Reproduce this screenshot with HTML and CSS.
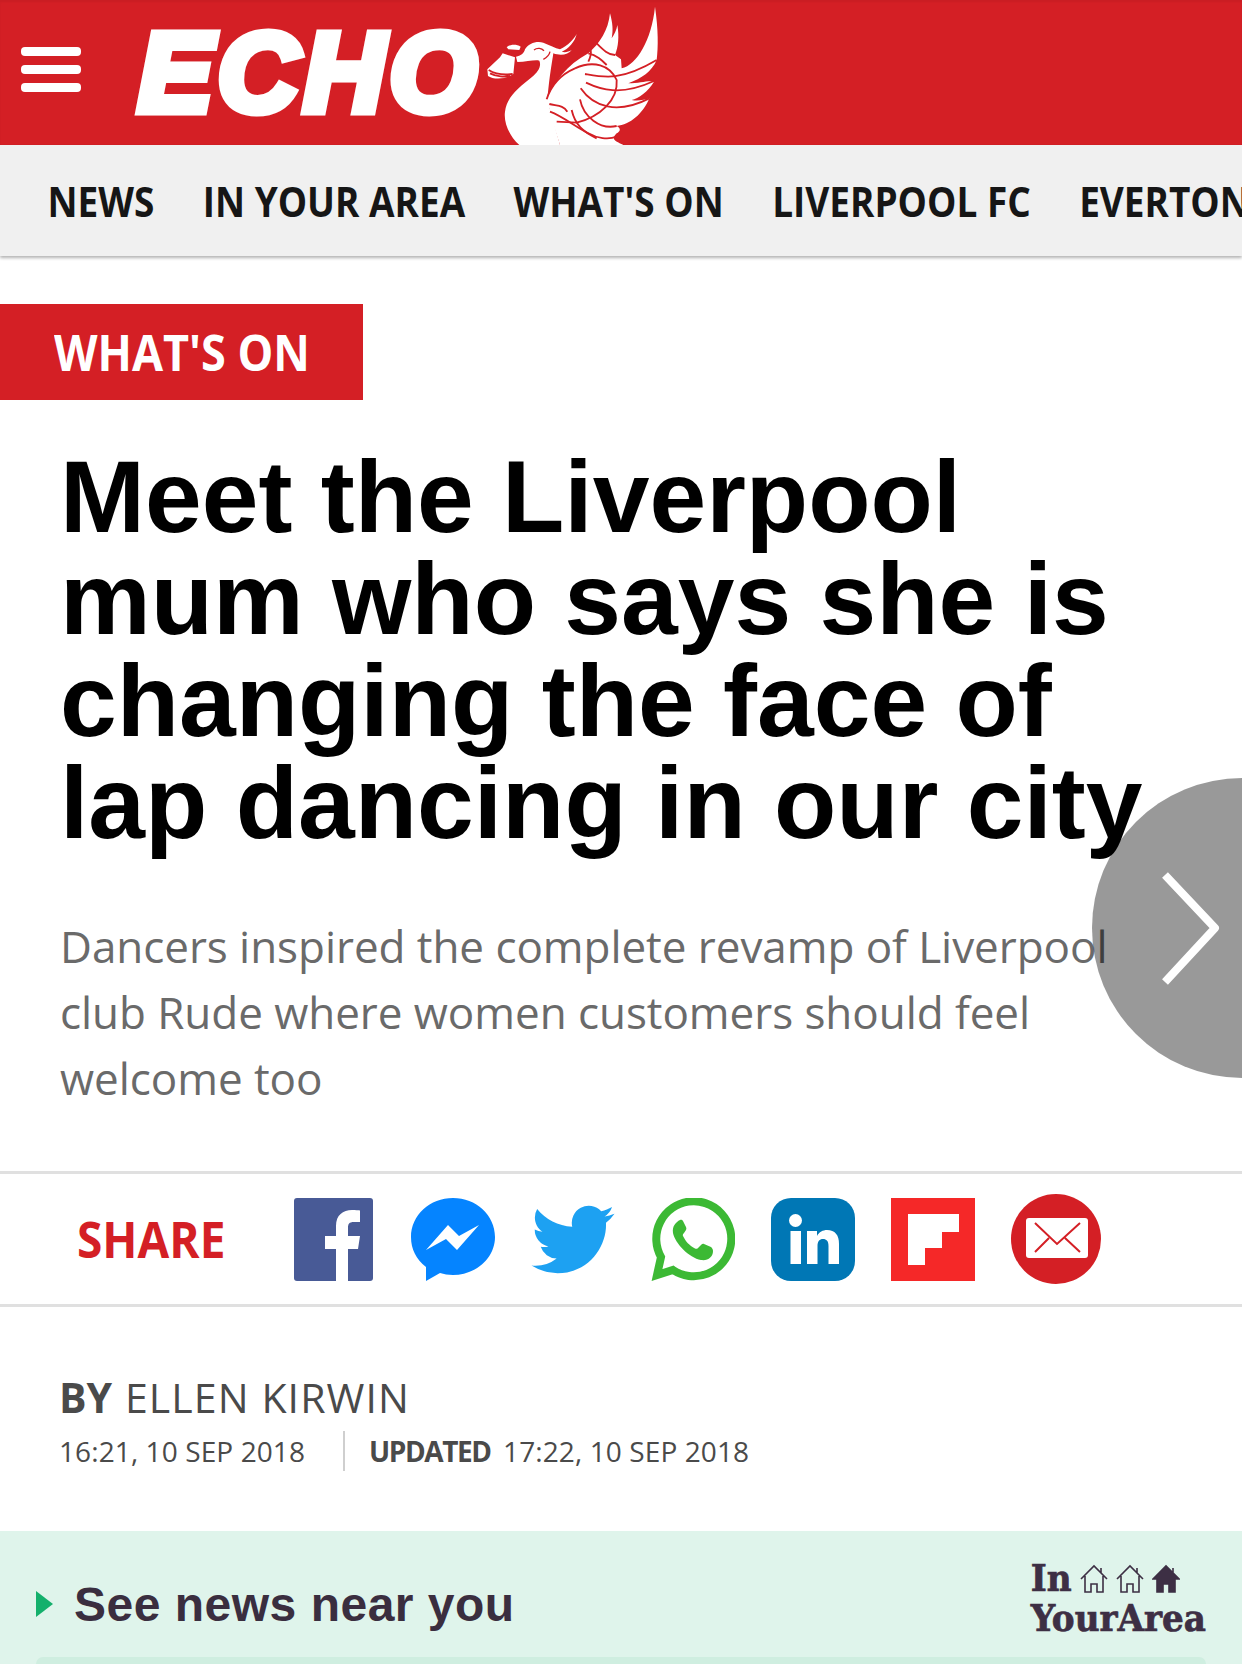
FILE: index.html
```html
<!DOCTYPE html>
<html>

  <head>
    <title>Meet the Liverpool mum who says she is changing the face of lap dancing in our city</title>
    <link rel="stylesheet" href="styles.css">
  </head>

  <body>
    <div class="page">

      <header class="site-header">
        <div class="menu-icon">
          <span></span>
          <span></span>
          <span></span>
        </div>
        <span class="logo-text">ECHO</span>
        <svg class="liver-bird" viewBox="0 0 660 435">
          <!-- bell -->
          <path class="bird-fill" d="M82 208 L120 172 L128 160 L165 172 L160 222 C140 238 100 240 84 228 Z"/>
          <path class="bird-line" d="M86 210 C105 222 135 225 158 222 M90 220 C110 230 135 232 150 228"/>
          <path class="bird-fill" d="M140 142 C150 132 170 132 182 140 L178 150 L145 148 Z"/>
          <!-- head and body -->
          <path class="bird-fill" d="M178 435 C150 410 130 370 135 335 C140 290 180 260 215 232 C235 215 245 198 238 182 C225 178 200 186 172 186 L168 170 C182 168 192 160 195 148 C205 130 230 122 250 128 C270 135 285 145 300 148 C325 135 340 120 350 102 C345 125 325 148 305 155 C315 158 325 156 335 150 C325 165 300 168 280 160 C276 190 270 215 262 300 L300 435 Z"/>
          <path class="bird-line thin" d="M222 150 C232 142 245 145 252 152 M250 178 C262 172 268 165 270 155"/>
          <!-- wings -->
          <path class="bird-fill" d="M258 300 C280 250 320 195 385 160 C420 130 445 90 450 40 C458 70 460 90 455 115 C462 105 470 90 472 75 C478 110 475 140 465 165 L483 178 L485 205 C530 195 575 120 585 20 C595 90 595 140 590 180 C575 215 545 235 505 250 C540 250 565 240 582 245 C565 275 535 295 515 300 C535 305 555 298 568 295 C550 340 510 375 470 378 C485 385 480 395 470 400 C450 420 470 425 490 435 L300 435 C290 400 270 350 270 330 Z"/>
          <path class="bird-line" d="M260 298 C275 250 310 220 345 205 M268 312 C290 318 310 315 322 335 M270 335 C310 350 345 380 385 400 C410 415 445 420 470 410"/>
          <path class="bird-line" d="M375 222 C430 232 480 245 590 180 M378 248 C420 268 480 290 582 243 M362 265 C400 320 470 345 568 295 M345 205 C400 180 450 195 470 240 C475 300 420 350 350 368 L290 365"/>
          <path class="bird-line" d="M360 298 C370 350 420 390 470 378 M335 330 C345 375 370 395 410 415 M385 160 C410 165 425 180 440 195 M410 130 C430 150 445 165 465 165 M392 150 C395 165 390 175 385 185"/>
        </svg>
      </header>

      <nav class="main-nav">
        <div class="nav-links">
          <span>NEWS</span>
          <span>IN YOUR AREA</span>
          <span>WHAT'S ON</span>
          <span>LIVERPOOL FC</span>
          <span>EVERTON FC</span>
        </div>
      </nav>

      <div class="section-tag"><span>WHAT'S ON</span></div>

      <h1 class="headline">Meet the Liverpool mum who says she is changing the face of lap dancing in our city</h1>

      <p class="standfirst">Dancers inspired the complete revamp of Liverpool club Rude where women customers should feel welcome too</p>

      <div class="share-bar">
        <span class="share-label">SHARE</span>
        <svg class="share-icon fb" viewBox="0 0 79 83">
          <rect width="79" height="83" rx="3" fill="#485a96"/>
          <path fill="#fff" d="M42 83 V51 H31 V38 H42 V28 C42 17 49 12 58 12 C61 12 65 12.3 66 12.5 V24 H60 C55 24 54 26 54 30 V38 H66 L64 51 H54 V83 Z"/>
        </svg>
        <svg class="share-icon" viewBox="0 0 84 83">
          <path fill="#0584ff" d="M42 0 C19 0 0 17 0 39 C0 51 5 61 15 69 V83 L29 75 C33 76 37 77 42 77 C65 77 84 60 84 39 C84 17 65 0 42 0 Z"/>
          <path fill="#fff" d="M15 52 L37 27 L48 38 L68 27 L46 52 L35 41 Z"/>
        </svg>
        <svg class="share-icon" viewBox="0 0 24 24">
          <path fill="#1da1f2" d="M23.953 4.57a10 10 0 01-2.825.775 4.958 4.958 0 002.163-2.723c-.951.555-2.005.959-3.127 1.184a4.92 4.92 0 00-8.384 4.482C7.69 8.095 4.067 6.13 1.64 3.162a4.822 4.822 0 00-.666 2.475c0 1.71.87 3.213 2.188 4.096a4.904 4.904 0 01-2.228-.616v.06a4.923 4.923 0 003.946 4.827 4.996 4.996 0 01-2.212.085 4.936 4.936 0 004.604 3.417 9.867 9.867 0 01-6.102 2.105c-.39 0-.779-.023-1.17-.067a13.995 13.995 0 007.557 2.209c9.053 0 13.998-7.496 13.998-13.985 0-.21 0-.42-.015-.63A9.935 9.935 0 0024 4.59z"/>
        </svg>
        <svg class="share-icon" viewBox="0 0 84 83">
          <path fill="none" stroke="#3cb934" stroke-width="8" d="M6 77 L10 59 A37.5 37.5 0 1 1 22 72 Z"/>
          <path fill="#3cb934" d="M29 22 C25 24 21 28 22 35 C24 45 38 60 50 62 C57 63 62 59 62 53 C62 51 61 50 60 49 L53 46 C52 45.5 51 46 50 47 L47 50 C46 51 45 51 44 50.5 C38 47 35 44 32 38 C31.5 37 32 36 33 35 L35 32 C35.5 31 35.5 30 35 29 L32 23 C31.5 22 30 21.5 29 22 Z"/>
        </svg>
        <svg class="share-icon" viewBox="0 0 84 83">
          <rect width="84" height="83" rx="20" fill="#0077b5"/>
          <circle cx="24.5" cy="22.5" r="6.5" fill="#fff"/>
          <rect x="19.5" y="33" width="10.5" height="33" fill="#fff"/>
          <path fill="#fff" d="M36 33 H46 V38 C48 34 52 32 56 32 C64 32 68 37 68 46 V66 H57.5 V48 C57.5 43 55.5 41 52 41 C48.5 41 46.5 43.5 46.5 48 V66 H36 Z"/>
        </svg>
        <svg class="share-icon" viewBox="0 0 84 83">
          <rect width="84" height="83" fill="#f52828"/>
          <polygon fill="#fff" points="17,16 68,16 68,34 51,34 51,50 34,50 34,67 17,67"/>
        </svg>
        <svg class="share-icon mail" viewBox="0 0 90 90">
          <circle cx="45" cy="45" r="45" fill="#d41f25"/>
          <rect x="15" y="24" width="62" height="40" rx="3" fill="#fff"/>
          <path fill="none" stroke="#d41f25" stroke-width="2" d="M24 29 L46 50 L69 29 M24 58 L38 44 M69 58 L54 44"/>
        </svg>
      </div>

      <div class="byline">
        <p class="author"><b>BY</b> ELLEN KIRWIN</p>
        <p class="dates">
          <span class="published">16:21, 10 SEP 2018</span>
          <span class="updated"><b>UPDATED</b> 17:22, 10 SEP 2018</span>
        </p>
      </div>

      <section class="near-you">
        <div class="near-you-top">
          <h2 class="near-you-title">See news near you</h2>
          <div class="iya-logo">
            <div class="iya-first">
              <span>In</span>
              <svg class="house" viewBox="0 0 28 29"><path d="M1 15 L14 2 L27 15 M21 4 V9 M5 12 V28 H11 V20 H17 V28 H23 V12"/></svg>
              <svg class="house" viewBox="0 0 28 29"><path d="M1 15 L14 2 L27 15 M21 4 V9 M5 12 V28 H11 V20 H17 V28 H23 V12"/></svg>
              <svg class="house solid" viewBox="0 0 28 29"><path d="M1 15 L14 2 L27 15 L23 15 V28 H17 V20 H11 V28 H5 V15 Z M21 4 V9"/></svg>
            </div>
            <div>YourArea</div>
          </div>
        </div>
        <div class="near-you-box"></div>
      </section>

      <div class="next-button">
        <svg viewBox="0 0 150 300"><path d="M73 97 L123 150 L73 204"/></svg>
      </div>

    </div>
  </body>

</html>
```

FILE: styles.css
```css
body{
  margin: 0;
  background-color: white;
}

.page{
  position: relative;
  width: 1242px;
  height: 1664px;
  overflow: hidden;
}

/* top red bar */
.site-header{
  display: flex;
  align-items: center;
  height: 145px;
  padding-left: 21px;
  background-color: #d41f25;
  box-shadow: inset 0 2px 2px rgba(0, 0, 0, 0.05);
  overflow: hidden;
}

.menu-icon{
  display: flex;
  flex-direction: column;
  gap: 9px;
  width: 60px;
  margin-top: -6px;
}
.menu-icon span{
  height: 9px;
  border-radius: 4px;
  background-color: white;
}

.logo-text{
  margin-left: 57px;
  margin-top: 1px;
  font-family: "Liberation Sans", Arial, sans-serif;
  font-size: 112px;
  font-weight: bold;
  font-style: italic;
  line-height: 1;
  color: white;
  -webkit-text-stroke: 9px white;
  letter-spacing: 5px;
}

.liver-bird{
  width: 220px;
  height: 145px;
  margin-left: -22px;
  flex-shrink: 0;
}
.bird-fill{
  fill: white;
}
.bird-line{
  fill: none;
  stroke: #d41f25;
  stroke-width: 5.5;
}
.bird-line.thin{
  stroke-width: 4;
}

/* section links */
.main-nav{
  height: 111px;
  background-color: #f0f0f0;
  box-shadow: 0 2px 3px rgba(0, 0, 0, 0.3);
  overflow: hidden;
}
.nav-links{
  display: flex;
  align-items: center;
  gap: 55px;
  height: 100%;
  padding-left: 54px;
  transform: scaleX(0.88);
  transform-origin: left;
  font-family: "Open Sans", Arial, sans-serif;
  font-size: 42px;
  font-weight: bold;
  color: #161616;
  white-space: nowrap;
}

.section-tag{
  display: flex;
  align-items: center;
  width: 363px;
  height: 96px;
  margin-top: 48px;
  background-color: #d41f25;
  color: white;
  font-family: "Open Sans", Arial, sans-serif;
  font-size: 50px;
  font-weight: bold;
}
.section-tag span{
  margin-left: 54px;
  white-space: nowrap;
  transform: scaleX(0.9);
  transform-origin: left;
}

.headline{
  margin: 46px 60px 0 60px;
  font-family: "Liberation Sans", Arial, sans-serif;
  font-size: 102px;
  font-weight: bold;
  line-height: 102px;
  color: black;
}

.standfirst{
  width: 1110px;
  margin: 59px 0 0 60px;
  font-family: "Open Sans", Arial, sans-serif;
  font-size: 44px;
  line-height: 66px;
  letter-spacing: -0.05px;
  color: #6a6a6a;
}

/* share row */
.share-bar{
  display: flex;
  align-items: center;
  height: 130px;
  margin-top: 60px;
  padding-left: 77px;
  border-top: 3px solid #e0e0e0;
  border-bottom: 3px solid #e0e0e0;
}
.share-label{
  width: 217px;
  font-family: "Open Sans", Arial, sans-serif;
  font-size: 50px;
  font-weight: bold;
  color: #d41f25;
  transform: scaleX(0.92);
  transform-origin: left;
}
.share-icon{
  width: 84px;
  height: 83px;
  margin-right: 36px;
}
.share-icon.fb{
  width: 79px;
  margin-right: 38px;
}
.share-icon.mail{
  width: 90px;
  height: 90px;
  margin-right: 0;
}

.byline{
  margin: 62px 0 0 59px;
  font-family: "Open Sans", Arial, sans-serif;
  color: #4a4a4a;
}
.author{
  margin: 0;
  font-size: 41px;
  line-height: 56px;
  letter-spacing: 1.1px;
}
.author b{
  letter-spacing: 0;
  margin-right: 1px;
}
.dates{
  display: flex;
  align-items: center;
  margin: 6px 0 0 0;
  font-size: 28px;
  line-height: 40px;
  letter-spacing: 0.1px;
}
.published{
  padding-right: 38px;
  border-right: 2px solid #cfcfcf;
}
.updated{
  margin-left: 24px;
}
.updated b{
  letter-spacing: -1.4px;
  margin-right: 5px;
}

/* in your area widget */
.near-you{
  position: absolute;
  left: 0;
  right: 0;
  bottom: 0;
  height: 133px;
  background-color: #dff4eb;
}
.near-you-top{
  display: flex;
  justify-content: space-between;
  height: 126px;
  padding-right: 36px;
}
.near-you-title{
  margin: 46px 0 0 36px;
  padding-left: 38px;
  font-family: "Liberation Sans", Arial, sans-serif;
  font-size: 48px;
  font-weight: bold;
  line-height: 56px;
  letter-spacing: 0.5px;
  color: #3a2e3f;
  position: relative;
}
.near-you-title::before{
  content: "";
  position: absolute;
  left: 0;
  top: 14px;
  border-left: 17px solid #14b06c;
  border-top: 13px solid transparent;
  border-bottom: 13px solid transparent;
}
.iya-logo{
  margin-top: 27px;
  font-family: "DejaVu Serif", serif;
  font-stretch: condensed;
  font-size: 38px;
  font-weight: bold;
  line-height: 40px;
  color: #3d2f44;
  -webkit-text-stroke: 0.7px #3d2f44;
}
.iya-first{
  display: flex;
  align-items: center;
  gap: 8px;
}
.house{
  width: 28px;
  height: 29px;
}
.house path{
  fill: none;
  stroke: #3d2f44;
  stroke-width: 1.6;
}
.house.solid path{
  fill: #3d2f44;
}
.near-you-box{
  height: 7px;
  margin: 0 36px;
  border-radius: 20px 20px 0 0;
  background-color: #cfeee0;
}

/* round next arrow over the article */
.next-button{
  position: absolute;
  right: 0;
  top: 778px;
  width: 150px;
  height: 300px;
  border-radius: 150px 0 0 150px;
  background-color: rgba(0, 0, 0, 0.4);
}
.next-button svg{
  display: block;
  width: 150px;
  height: 300px;
}
.next-button path{
  fill: none;
  stroke: white;
  stroke-width: 8;
  stroke-linejoin: round;
}
```
